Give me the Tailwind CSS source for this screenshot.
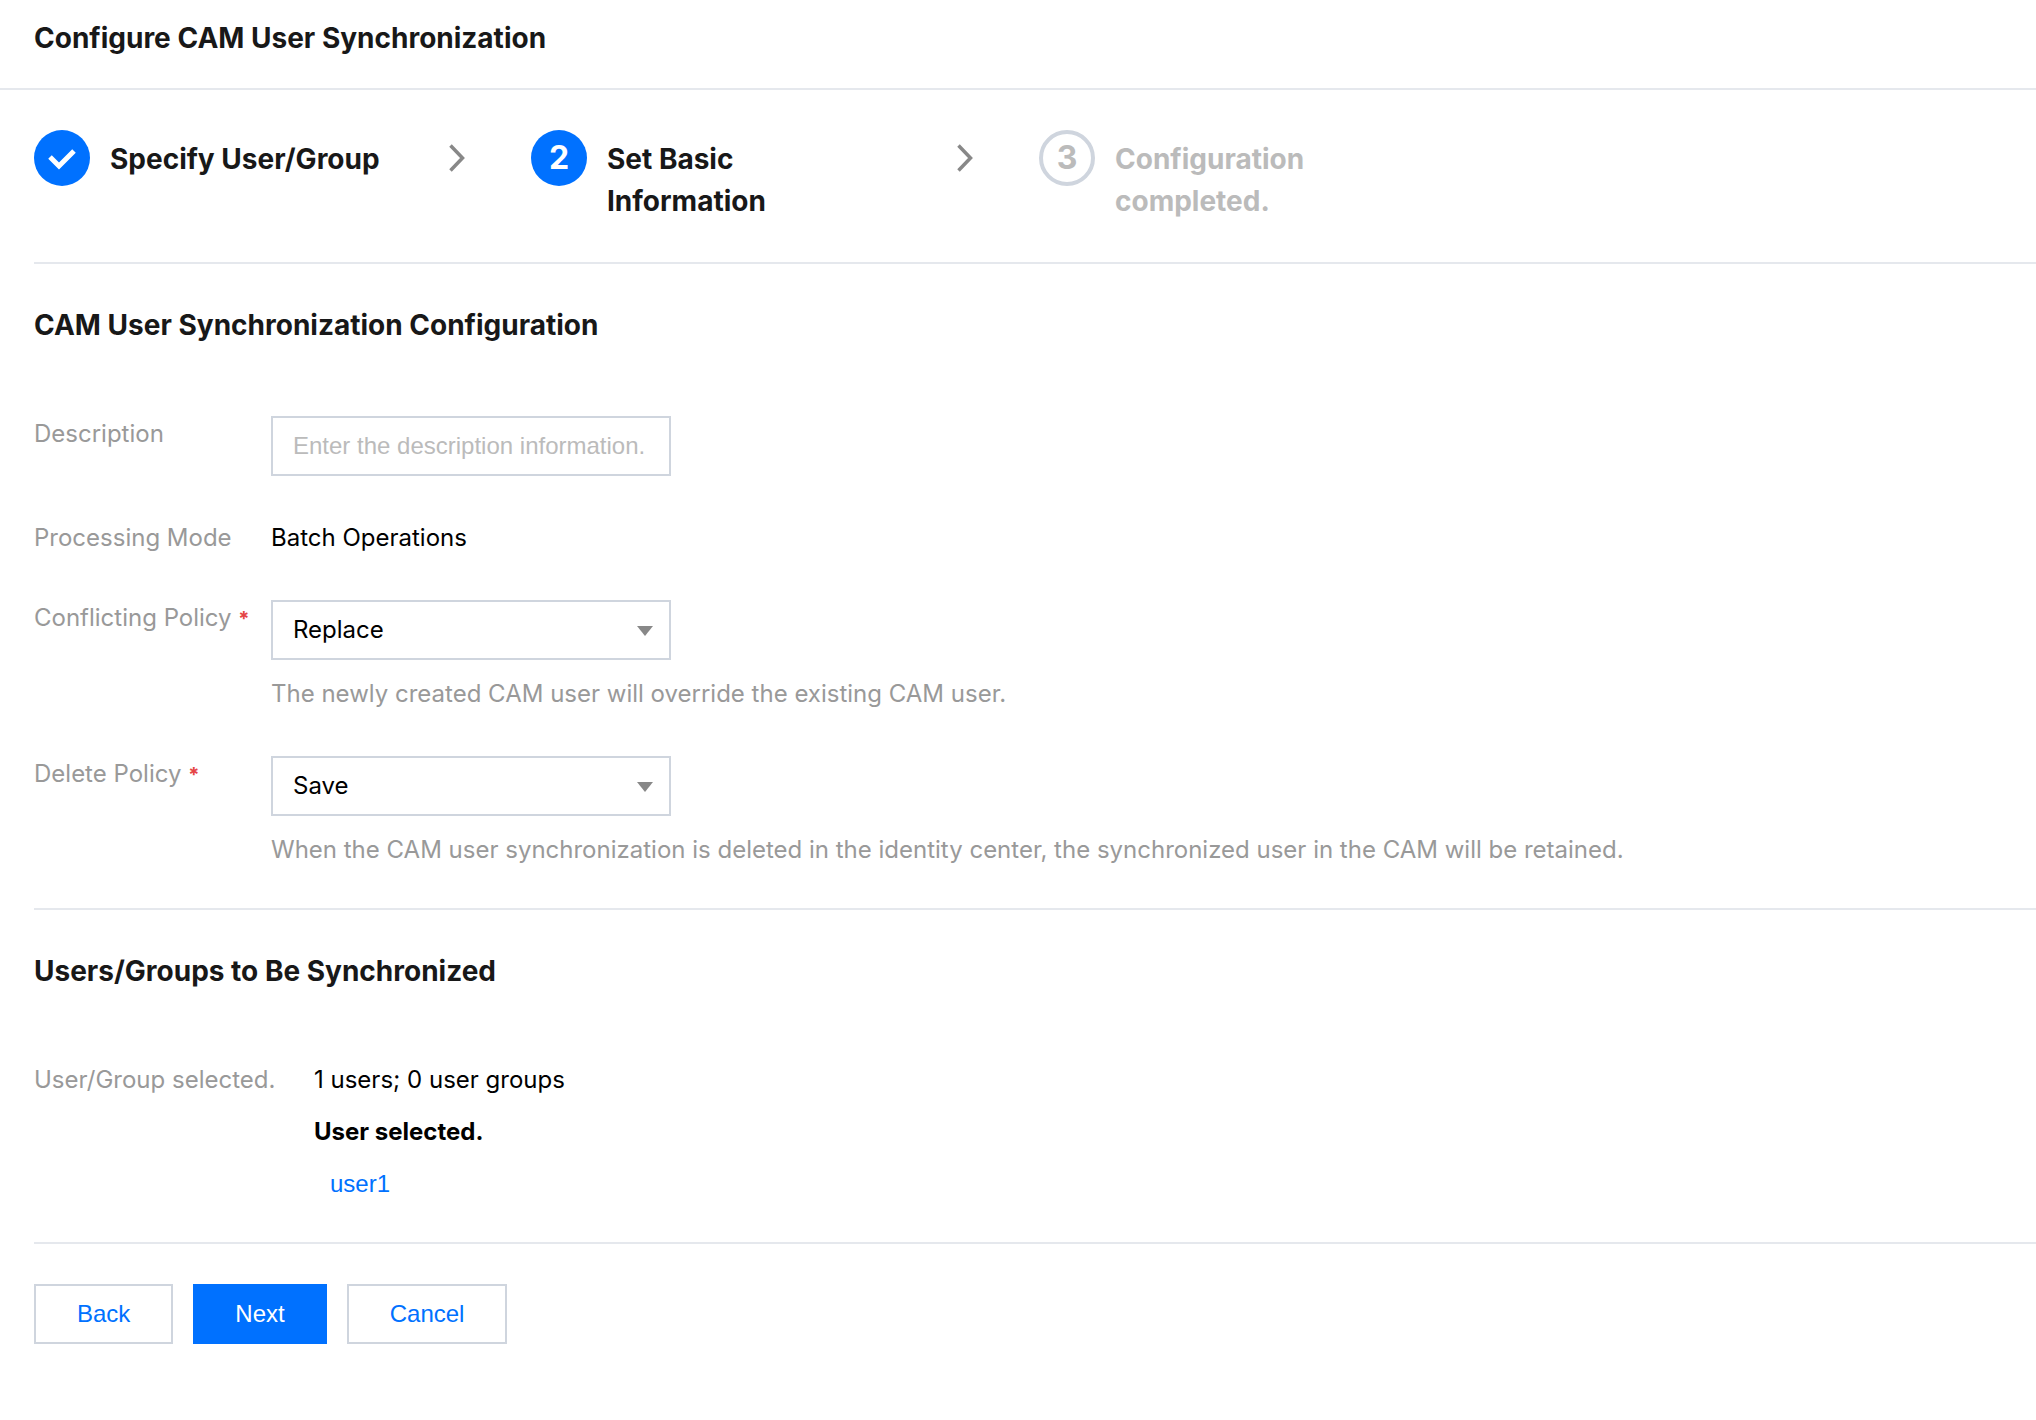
<!DOCTYPE html>
<html lang="en">

<head>
    <meta charset="UTF-8">
    <meta name="viewport" content="width=device-width, initial-scale=1.0">
    <title>Configure CAM User Synchronization</title>
    <script src="https://cdn.jsdelivr.net/npm/@tailwindcss/browser@4"></script>
</head>

<body class="bg-white font-[Inter,sans-serif] text-[24px] leading-[36px] text-black">
    <header class="border-b-2 border-[#e5e8ed] px-[34px] pt-[17px] pb-[29px]">
        <h1 class="text-[28px] leading-[42px] font-bold text-[#181818]">Configure CAM User Synchronization</h1>
    </header>

    <main class="pl-[34px]">
        <!-- Steps -->
        <ol class="flex items-start border-b-2 border-[#e5e8ed] py-10 text-[28px] leading-[42px] font-bold text-[#181818]">
            <li class="flex w-[497px] items-start">
                <span class="flex size-14 shrink-0 items-center justify-center rounded-full bg-[#0071ff]">
                    <svg class="size-14" viewBox="0 0 56 56" fill="none" stroke="#fff" stroke-width="5">
                        <path d="M16 27l9 9 15-15" />
                    </svg>
                </span>
                <span class="ml-5 pt-2 whitespace-nowrap">Specify User/Group</span>
                <svg class="mt-[14px] mr-[66px] ml-auto h-7 w-4 shrink-0" viewBox="0 0 16 28" fill="none" stroke="#888" stroke-width="3.500">
                    <path d="M1.500 1.500l12 12.500-12 12.500" />
                </svg>
            </li>
            <li class="flex w-[508px] items-start">
                <span class="flex size-14 shrink-0 items-center justify-center rounded-full bg-[#0071ff] text-[32px] text-white">2</span>
                <span class="ml-5 w-[280px] pt-2">Set Basic Information</span>
                <svg class="mt-[14px] mr-[66px] ml-auto h-7 w-4 shrink-0" viewBox="0 0 16 28" fill="none" stroke="#888" stroke-width="3.500">
                    <path d="M1.500 1.500l12 12.500-12 12.500" />
                </svg>
            </li>
            <li class="flex items-start text-[#bbb]">
                <span class="flex size-14 shrink-0 items-center justify-center rounded-full border-4 border-[#cfd5de] text-[32px]">3</span>
                <span class="ml-5 w-[280px] pt-2">Configuration completed.</span>
            </li>
        </ol>

        <!-- Basic information -->
        <section class="border-b-2 border-[#e5e8ed] py-10">
            <h2 class="mb-[70px] text-[28px] leading-[42px] font-bold text-[#181818]">CAM User Synchronization Configuration</h2>
            <div class="flex flex-col gap-11">
                <div class="flex items-start">
                    <label for="description" class="w-[237px] shrink-0 text-[#999]">Description</label>
                    <input type="text" id="description"
                        class="h-[60px] w-[400px] border-2 border-[#cfd5de] px-5 font-['Liberation_Sans',sans-serif] placeholder-[#bbb] outline-none focus:border-[#0071ff]"
                        placeholder="Enter the description information." />
                </div>
                <div class="flex items-start">
                    <div class="w-[237px] shrink-0 text-[#999]">Processing Mode</div>
                    <div>Batch Operations</div>
                </div>
                <div class="flex items-start">
                    <label for="conflictPolicy" class="w-[237px] shrink-0 whitespace-nowrap text-[#999]">Conflicting Policy <span class="text-[20px] font-bold text-[#e54545]">*</span></label>
                    <div>
                        <div class="relative w-[400px]">
                            <select id="conflictPolicy" class="h-[60px] w-full appearance-none border-2 border-[#cfd5de] bg-white px-5 outline-none">
                                <option>Replace</option>
                            </select>
                            <svg class="pointer-events-none absolute top-[26px] right-[18px] h-[10px] w-4" viewBox="0 0 16 10" fill="#888">
                                <path d="M0 0h16l-8 10z" />
                            </svg>
                        </div>
                        <p class="mt-4 text-[#999]">The newly created CAM user will override the existing CAM user.</p>
                    </div>
                </div>
                <div class="flex items-start">
                    <label for="deletePolicy" class="w-[237px] shrink-0 whitespace-nowrap text-[#999]">Delete Policy <span class="text-[20px] font-bold text-[#e54545]">*</span></label>
                    <div>
                        <div class="relative w-[400px]">
                            <select id="deletePolicy" class="h-[60px] w-full appearance-none border-2 border-[#cfd5de] bg-white px-5 outline-none">
                                <option>Save</option>
                            </select>
                            <svg class="pointer-events-none absolute top-[26px] right-[18px] h-[10px] w-4" viewBox="0 0 16 10" fill="#888">
                                <path d="M0 0h16l-8 10z" />
                            </svg>
                        </div>
                        <p class="mt-4 text-[#999]">When the CAM user synchronization is deleted in the identity center, the synchronized user in the CAM will be retained.</p>
                    </div>
                </div>
            </div>
        </section>

        <!-- Selected users -->
        <section class="border-b-2 border-[#e5e8ed] py-10">
            <h2 class="mb-[70px] text-[28px] leading-[42px] font-bold text-[#181818]">Users/Groups to Be Synchronized</h2>
            <div class="flex items-start">
                <div class="w-[280px] shrink-0 whitespace-nowrap text-[#999]">User/Group selected.</div>
                <div class="flex flex-col gap-4">
                    <p>1 users; 0 user groups</p>
                    <p class="font-bold">User selected.</p>
                    <a href="#" class="pl-4 font-['Liberation_Sans',sans-serif] text-[#0071ff]">user1</a>
                </div>
            </div>
        </section>

        <!-- Footer buttons -->
        <div class="flex gap-5 py-10 font-['Liberation_Sans',sans-serif]">
            <button type="button" class="h-[60px] border-2 border-[#cfd5de] px-[41px] text-[#0071ff] hover:bg-gray-50">Back</button>
            <button type="submit" class="h-[60px] border-2 border-[#0071ff] bg-[#0071ff] px-10 text-white hover:bg-blue-700">Next</button>
            <button type="button" class="h-[60px] border-2 border-[#cfd5de] px-[41px] text-[#0071ff] hover:bg-gray-50">Cancel</button>
        </div>
    </main>
</body>

</html>
